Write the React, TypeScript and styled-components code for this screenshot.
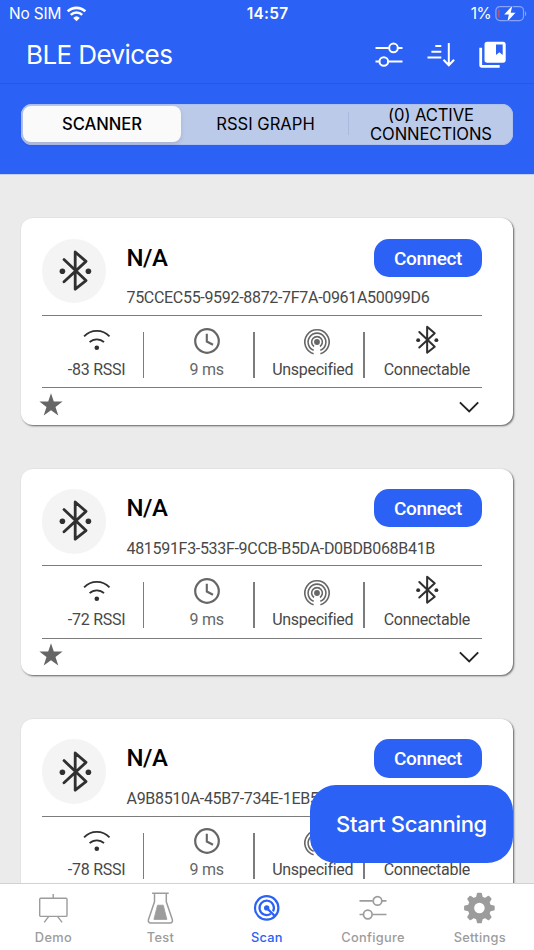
import React from 'react';
import styled, { createGlobalStyle, css } from 'styled-components';

const BLUE = '#2b61f4';

const GlobalStyle = createGlobalStyle`
  * { box-sizing: border-box; }
  html, body { margin: 0; padding: 0; }
  body { font-family: Inter, "Liberation Sans", sans-serif; background: #ebebeb; overflow: hidden; }
  button { border: 0; padding: 0; margin: 0; background: none; font: inherit; color: inherit; }
  svg { display: block; flex: none; overflow: visible; }
`;

const Screen = styled.div`
  position: relative;
  display: flex;
  flex-direction: column;
  width: 534px;
  height: 950px;
  overflow: hidden;
  background: #ebebeb;
`;

const Header = styled.header`
  flex: none;
  height: 174px;
  background: ${BLUE};
  color: #fff;
  box-shadow: 0 0.5px 0 #9db5f5;
`;

const StatusBar = styled.div`
  display: grid;
  grid-template-columns: 1fr auto 1fr;
  align-items: center;
  height: 28px;
  padding: 0 7px 0 9px;
  font-size: 15.4px;
  line-height: 28px;
`;

const StatusSide = styled.div<{ $end?: boolean }>`
  display: flex;
  align-items: center;
  gap: ${p => (p.$end ? 4 : 6)}px;
  justify-content: ${p => (p.$end ? 'flex-end' : 'flex-start')};
  letter-spacing: ${p => (p.$end ? -0.5 : -0.15)}px;
`;

const Clock = styled.div`
  margin-right: 1px;
  font-weight: 600;
  letter-spacing: 0.3px;
`;

const TitleBar = styled.div`
  display: flex;
  align-items: center;
  justify-content: space-between;
  height: 55.5px;
  padding: 0 28px 0 26px;
  border-bottom: 1px solid #2959df;
`;

const PageTitle = styled.h1`
  margin: 0;
  font-size: 26px;
  font-weight: 400;
  letter-spacing: -0.58px;
  line-height: 54px;
`;

const Actions = styled.div`
  display: flex;
  align-items: center;
  gap: 24px;
`;

const Segments = styled.div`
  display: grid;
  grid-template-columns: 158px 167px 1fr;
  grid-template-rows: 36px;
  height: 41px;
  margin: 20px 21px 0;
  padding: 2.5px 2px;
  border-radius: 11px;
  background: #bccaea;
  box-shadow: inset 0 0 0 1px #aec0ee;
`;

const Segment = styled.button<{ $active?: boolean; $divided?: boolean }>`
  display: flex;
  align-items: center;
  justify-content: center;
  min-height: 0;
  padding: 2px 0 0 2px;
  color: #000;
  font-size: 16.6px;
  font-weight: ${p => (p.$active ? 500 : 400)};
  line-height: 19.5px;
  text-align: center;
  position: relative;
  ${p => p.$active && css`
    padding-left: 0;
    background: #fafafa;
    border-radius: 8px;
    letter-spacing: -0.05px;
    box-shadow: 0 2px 4px rgba(0, 0, 0, 0.12);
  `}
  ${p => p.$divided && css`
    letter-spacing: -0.1px;
    padding-left: 3px;
    &::before {
      content: '';
      position: absolute;
      left: 0;
      top: 6px;
      bottom: 7px;
      width: 1px;
      background: #aab9dc;
    }
  `}
`;

const List = styled.main`
  flex: 1;
  min-height: 0;
  overflow: hidden;
  display: flex;
  flex-direction: column;
  gap: 43.8px;
  padding: 44.4px 21px 0;
`;

const Card = styled.article`
  flex: none;
  height: 206.5px;
  padding: 20px 31px 0 20.5px;
  border-radius: 12px;
  background: #fff;
  box-shadow: 1px 1px 2px rgba(0, 0, 0, 0.6);
`;

const CardTop = styled.div`
  display: grid;
  grid-template-columns: 64.5px 1fr;
  column-gap: 20.5px;
  height: 77.7px;
  border-bottom: 1.4px solid #7c7c7c;
`;

const Avatar = styled.div`
  display: flex;
  align-items: center;
  justify-content: center;
  width: 64.5px;
  height: 64.5px;
  margin-top: 0.4px;
  padding-left: 2px;
  border-radius: 50%;
  background: #f4f4f4;
`;

const DeviceInfo = styled.div`
  display: flex;
  flex-direction: column;
  gap: 11px;
`;

const DeviceHead = styled.div`
  display: flex;
  align-items: center;
  justify-content: space-between;
  height: 39px;
`;

const DeviceName = styled.h2`
  margin: 0;
  padding-top: 1px;
  color: #000;
  font: 500 24px/39px Roboto, sans-serif;
  letter-spacing: -0.5px;
`;

const ConnectButton = styled.button`
  width: 108px;
  height: 38.5px;
  padding-top: 1px;
  border-radius: 15px;
  background: ${BLUE};
  color: #fff;
  font: 500 19px/38px Roboto, sans-serif;
  letter-spacing: -0.4px;
`;

const Uuid = styled.div`
  color: #484848;
  font: 400 16px/20px Roboto, sans-serif;
  letter-spacing: -0.31px;
  white-space: nowrap;
`;

const Stats = styled.div`
  display: grid;
  grid-template-columns: repeat(4, 110.1px);
  height: 72.3px;
  border-bottom: 1.4px solid #7c7c7c;
`;

const Stat = styled.div<{ $last?: boolean }>`
  display: flex;
  flex-direction: column;
  align-items: center;
  height: 46px;
  margin-top: 16px;
  padding-left: 8px;
  margin-left: -8px;
  position: relative;
  ${p => !p.$last && css`
    &::after {
      content: '';
      position: absolute;
      right: 7.2px;
      top: 0;
      width: 1.3px;
      height: 46px;
      background: #7c7c7c;
    }
  `}
`;

const StatIcon = styled.div<{ $drop?: number }>`
  flex: none;
  display: flex;
  align-items: center;
  justify-content: center;
  height: 28px;
  margin-top: ${p => -5.2 + (p.$drop ?? 0)}px;
  margin-bottom: ${p => -(p.$drop ?? 0)}px;
`;

const StatLabel = styled.div<{ $shift?: number; $muted?: boolean }>`
  flex: none;
  margin-top: 4px;
  margin-left: ${p => p.$shift ?? 0}px;
  color: ${p => (p.$muted ? '#666' : '#484848')};
  font: 400 16px/22px Roboto, sans-serif;
  letter-spacing: -0.28px;
  white-space: nowrap;
`;

const CardFoot = styled.div`
  display: flex;
  align-items: center;
  justify-content: space-between;
  height: 35px;
  padding: 0 3px 3px 0;
  margin-left: -3px;
`;

const Toggle = styled.span`
  padding-top: 5px;
`;

const ScanButton = styled.button`
  position: absolute;
  left: 310px;
  top: 785.4px;
  width: 203px;
  height: 78px;
  border-radius: 26px;
  background: ${BLUE};
  color: #fff;
  font-size: 22px;
  font-weight: 500;
  letter-spacing: -0.3px;
`;

const TabBar = styled.nav`
  position: relative;
  flex: none;
  display: grid;
  grid-template-columns: 106.8px 107.4px 105.4px 107px 106.4px;
  height: 66.8px;
  background: #fff;
  border-top: 1px solid #d2d2d2;
`;

const Tab = styled.button<{ $active?: boolean }>`
  display: flex;
  flex-direction: column;
  align-items: center;
  color: ${p => (p.$active ? BLUE : '#9c9c9c')};
  font-size: 12.8px;
  font-weight: 500;
  letter-spacing: 0.3px;
  line-height: 16px;
`;

const TabIcon = styled.span`
  display: flex;
  align-items: center;
  justify-content: center;
  height: 36px;
  margin: 5.5px 0 4.5px;
`;

const WifiStatusIcon = () => (
  <svg width="19" height="15" viewBox="0 0 19 15" fill="none" stroke="#fff">
    <path d="M.7 4.4a12.7 12.7 0 0 1 17.6 0" strokeWidth="2.7" />
    <path d="M3.8 7.9a8.1 8.1 0 0 1 11.4 0" strokeWidth="2.6" />
    <path d="M9.5 14.2 6.2 10.9a4.8 4.8 0 0 1 6.6 0z" fill="#fff" stroke="none" />
  </svg>
);

const BatteryIcon = () => (
  <svg width="32" height="16" viewBox="0 0 32 16">
    <rect x=".9" y=".6" width="27.6" height="14" rx="4" fill="none" stroke="#86a5fa" strokeWidth="1.2" />
    <path d="M30 5.2c1.6.5 1.6 4.4 0 4.9z" fill="#86a5fa" />
    <path d="M3.9 3.6v8" stroke="#e8504c" strokeWidth="1.1" />
    <path d="M17.3-.3 9.2 8.4h4.6L12.4 15.5 20.5 6.7h-4.8z" fill="#fff" stroke={BLUE} strokeWidth="1.4" paintOrder="stroke" />
  </svg>
);

const SlidersIcon = ({ width = 1.7 }: { width?: number }) => (
  <svg width="28" height="26" viewBox="0 0 28 26" fill="none" stroke="currentColor" strokeWidth={width}>
    <path d="M.5 5.9h13.2M23 5.9h4.5M.5 19.5h3.7M13.4 19.5h14.1" />
    <circle cx="18.5" cy="5.9" r="4.3" />
    <circle cx="8.8" cy="19.5" r="4.3" />
  </svg>
);

const SortIcon = () => (
  <svg width="28" height="26" viewBox="0 0 28 26" fill="none" stroke="#fff" strokeWidth="2">
    <path d="M8.3 4h6M4.4 9.7h9.9M.5 15.4h13.8M21.8 1v22.5M16.5 17.7l5.3 5.5 5.3-5.5" />
  </svg>
);

const LibraryIcon = () => (
  <svg width="27" height="28" viewBox="0 0 27 28" fill="#fff">
    <path d="M.3 6.8h2.8v17.3h17.6v2.7H3A2.7 2.7 0 0 1 .3 24.1z" />
    <path fillRule="evenodd" d="M8.2.7h15.8a2.7 2.7 0 0 1 2.7 2.7v15.6a2.7 2.7 0 0 1-2.7 2.7H8.2a2.7 2.7 0 0 1-2.7-2.7V3.4A2.7 2.7 0 0 1 8.2.7zm8.8 2.8v10.4l3.4-2.6 3.3 2.6V3.5z" />
  </svg>
);

const BluetoothIcon = ({ size = 40, stroke = 2.8 }: { size?: number; stroke?: number }) => (
  <svg width={size} height={size} viewBox="0 0 40 40" fill="none" stroke="#303030" strokeWidth={stroke} strokeLinecap="round" strokeLinejoin="round">
    <path d="M9 8.6 31 29.6 20.2 38.2V1L31 10.4 9 30.7" />
    <circle cx="7.4" cy="20.2" r="2.8" fill="#303030" stroke="none" />
    <circle cx="33.4" cy="20.2" r="2.8" fill="#303030" stroke="none" />
  </svg>
);

const SignalIcon = () => (
  <svg width="28" height="24" viewBox="0 0 28 24" fill="none" stroke="#303030" strokeWidth="1.8">
    <path d="M1.1 9.3a17.5 17.5 0 0 1 25.4 0M6.6 15.2a10.4 10.4 0 0 1 14.4 0" />
    <circle cx="13.8" cy="20.8" r="2.3" fill="#303030" stroke="none" />
  </svg>
);

const ClockIcon = () => (
  <svg width="26" height="26" viewBox="0 0 26 26" fill="none" stroke="#666">
    <circle cx="13" cy="13" r="11.8" strokeWidth="2.2" />
    <path d="M12.8 5.7v7.8l6.2 3.3" strokeWidth="2.1" />
  </svg>
);

const BroadcastIcon = () => (
  <svg width="26" height="26" viewBox="0 0 26 26" fill="none" stroke="#666" strokeWidth="1.6">
    <circle cx="13" cy="13" r="2.9" fill="#666" stroke="none" />
    <path d="M10 17.5a5.4 5.4 0 1 1 6 0M9.7 21.3a8.9 8.9 0 1 1 6.6 0M9.6 24.7a12.2 12.2 0 1 1 6.8 0" />
  </svg>
);

const StarIcon = () => (
  <svg width="24" height="23" viewBox="0 0 24 23" fill="#666">
    <path d="M12 .2 14.8 8.6H23.6L16.5 13.9 19.3 22.5 12 17.3 4.7 22.5 7.5 13.9 .4 8.6H9.2z" />
  </svg>
);

const ChevronIcon = () => (
  <svg width="20" height="12" viewBox="0 0 20 12" fill="none" stroke="#222" strokeWidth="1.9">
    <path d="m.9 1.4 9.3 9.1 9-9.1" />
  </svg>
);

const BoardIcon = () => (
  <svg width="30" height="30" viewBox="0 0 30 30" fill="none" stroke="currentColor" strokeWidth="1.4">
    <rect x="1.7" y="5.2" width="27.3" height="18.2" rx="1" />
    <path d="M15.2 1V5M10.6 23.6 6.2 29.4M19.7 23.6l4.4 5.8" />
  </svg>
);

const FlaskIcon = () => (
  <svg width="26" height="32" viewBox="0 0 26 32" fill="none" stroke="currentColor" strokeWidth="1.5">
    <path d="M5.1 1.2h16.6M7.5 1.2v8.6L1.5 27.5c-.7 2.1.5 3.4 2.2 3.4h19.4c1.7 0 2.9-1.3 2.2-3.4L19.3 9.8V1.2" />
    <path d="M10.5 13.2h5.8l3.6 14.2H6.9z" fill="currentColor" stroke="currentColor" strokeWidth=".8" strokeLinejoin="round" />
  </svg>
);

const RadarIcon = () => (
  <svg width="26" height="26" viewBox="0 0 26 26" fill="none" stroke="currentColor" strokeWidth="2.2">
    <circle cx="12.7" cy="12.9" r="11.7" />
    <path d="M16.7 18.9a7.2 7.2 0 1 1 2.3-2.5M13 13.2l8.2 8.2" />
    <circle cx="12.7" cy="12.9" r="2.7" fill="currentColor" stroke="none" />
  </svg>
);

const GearIcon = () => (
  <svg width="32" height="32" viewBox="0 0 32 32">
    <g fill="currentColor">
      {[0, 45, 90, 135].map(angle => (
        <path key={angle} d="M12.9 1.6q.2-.9 1-.9h3q.8 0 1 .9L18.9 6v20l-1 4.4q-.2.9-1 .9h-3q-.8 0-1-.9L11.9 26V6z" transform={`rotate(${angle} 15.4 16)`} />
      ))}
      <circle cx="15.4" cy="16" r="11.6" />
    </g>
    <circle cx="15.4" cy="16" r="5.3" fill="#fff" />
  </svg>
);

const devices = [
  { id: '75CCEC55-9592-8872-7F7A-0961A50099D6', rssi: -83 },
  { id: '481591F3-533F-9CCB-B5DA-D0BDB068B41B', rssi: -72 },
  { id: 'A9B8510A-45B7-734E-1EB5-3C6F20D4E817', rssi: -78 },
];

const DeviceCard = ({ id, rssi }: { id: string; rssi: number }) => (
  <Card>
    <CardTop>
      <Avatar><BluetoothIcon /></Avatar>
      <DeviceInfo>
        <DeviceHead>
          <DeviceName>N/A</DeviceName>
          <ConnectButton>Connect</ConnectButton>
        </DeviceHead>
        <Uuid>{id}</Uuid>
      </DeviceInfo>
    </CardTop>
    <Stats>
      <Stat>
        <StatIcon $drop={-1.5}><SignalIcon /></StatIcon>
        <StatLabel>{rssi} RSSI</StatLabel>
      </Stat>
      <Stat>
        <StatIcon><ClockIcon /></StatIcon>
        <StatLabel $muted>9 ms</StatLabel>
      </Stat>
      <Stat>
        <StatIcon $drop={1.5}><BroadcastIcon /></StatIcon>
        <StatLabel $shift={-8}>Unspecified</StatLabel>
      </Stat>
      <Stat $last>
        <StatIcon $drop={-0.7}><BluetoothIcon size={28} stroke={2.9} /></StatIcon>
        <StatLabel>Connectable</StatLabel>
      </Stat>
    </Stats>
    <CardFoot>
      <StarIcon />
      <Toggle><ChevronIcon /></Toggle>
    </CardFoot>
  </Card>
);

export default function App() {
  return (
    <>
      <GlobalStyle />
      <Screen>
        <Header>
          <StatusBar>
            <StatusSide>No SIM <WifiStatusIcon /></StatusSide>
            <Clock>14:57</Clock>
            <StatusSide $end>1% <BatteryIcon /></StatusSide>
          </StatusBar>
          <TitleBar>
            <PageTitle>BLE Devices</PageTitle>
            <Actions>
              <SlidersIcon width={2} />
              <SortIcon />
              <LibraryIcon />
            </Actions>
          </TitleBar>
          <Segments>
            <Segment $active>SCANNER</Segment>
            <Segment>RSSI GRAPH</Segment>
            <Segment $divided>(0) ACTIVE<br />CONNECTIONS</Segment>
          </Segments>
        </Header>
        <List>
          {devices.map(device => <DeviceCard key={device.id} {...device} />)}
        </List>
        <TabBar>
          <Tab><TabIcon><BoardIcon /></TabIcon>Demo</Tab>
          <Tab><TabIcon><FlaskIcon /></TabIcon>Test</Tab>
          <Tab $active><TabIcon><RadarIcon /></TabIcon>Scan</Tab>
          <Tab><TabIcon><SlidersIcon /></TabIcon>Configure</Tab>
          <Tab><TabIcon><GearIcon /></TabIcon>Settings</Tab>
        </TabBar>
        <ScanButton>Start Scanning</ScanButton>
      </Screen>
    </>
  );
}
